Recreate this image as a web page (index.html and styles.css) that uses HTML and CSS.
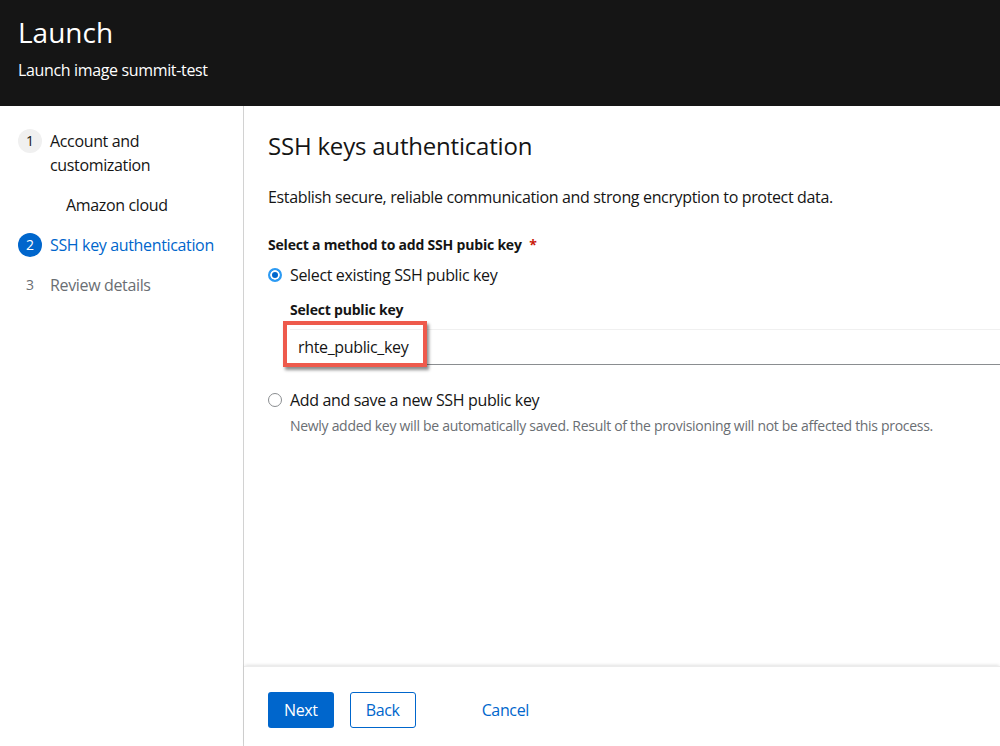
FILE: index.html
```html
<!DOCTYPE html>
<html lang="en">
<head>
<meta charset="utf-8">
<title>Launch</title>
<link rel="stylesheet" href="styles.css">
</head>
<body>
<header class="header">
  <h1 class="title">Launch</h1>
  <p class="subtitle">Launch image summit-test</p>
</header>
<div class="wizard">
  <nav class="nav">
    <div class="step">
      <span class="num num-gray">1</span>
      <span class="step-text">Account and<br>customization</span>
    </div>
    <div class="substep">Amazon cloud</div>
    <div class="step step-current">
      <span class="num num-blue">2</span>
      <span class="step-text">SSH key authentication</span>
    </div>
    <div class="step step-disabled">
      <span class="num num-plain">3</span>
      <span class="step-text">Review details</span>
    </div>
  </nav>
  <main class="main">
    <section class="content">
      <h2 class="heading">SSH keys authentication</h2>
      <p class="desc">Establish secure, reliable communication and strong encryption to protect data.</p>
      <div class="group-label">Select a method to add SSH pubic key <span class="req">*</span></div>
      <div class="radio-row">
        <span class="radio radio-on"></span>
        <span class="radio-label">Select existing SSH public key</span>
      </div>
      <div class="nested">
        <div class="field-label">Select public key</div>
        <div class="input-wrap">
          <div class="input">rhte_public_key</div>
          <div class="highlight"></div>
        </div>
      </div>
      <div class="radio-row radio-row-2">
        <span class="radio"></span>
        <span class="radio-label">Add and save a new SSH public key</span>
      </div>
      <div class="radio-help">Newly added key will be automatically saved. Result of the provisioning will not be affected this process.</div>
    </section>
    <footer class="footer">
      <button class="btn btn-primary">Next</button>
      <button class="btn btn-secondary">Back</button>
      <button class="btn btn-link">Cancel</button>
    </footer>
  </main>
</div>
</body>
</html>
```

FILE: styles.css
```css
* { box-sizing: border-box; }
html, body { margin: 0; padding: 0; }
body {
  font-family: "Open Sans", "Noto Sans", sans-serif;
  letter-spacing: -0.35px;
  color: #151515;
  background: #fff;
  width: 1000px;
  height: 746px;
  overflow: hidden;
}
.header {
  background: #151515;
  color: #fff;
  height: 106px;
  padding: 14px 18px 0;
}
.title {
  margin: 0;
  font-size: 28px;
  font-weight: 500;
  line-height: 36px;
  letter-spacing: 0;
}
.subtitle {
  margin: 8px 0 0;
  font-size: 16px;
  line-height: 24px;
}
.wizard {
  display: flex;
  height: 640px;
}
.nav {
  width: 244px;
  flex: none;
  border-right: 1px solid #d2d2d2;
  padding: 23px 0 0 18px;
}
.step {
  display: flex;
  align-items: flex-start;
  font-size: 16px;
  line-height: 24px;
  margin-bottom: 16px;
}
.num {
  width: 24px;
  height: 24px;
  border-radius: 50%;
  flex: none;
  display: flex;
  align-items: center;
  justify-content: center;
  font-size: 14px;
  margin-right: 8px;
  letter-spacing: 0;
}
.num-gray { background: #f0f0f0; color: #151515; }
.num-blue { background: #0066cc; color: #fff; }
.num-plain { color: #6a6e73; }
.step-current { color: #0066cc; }
.step-disabled { color: #6a6e73; }
.substep {
  font-size: 16px;
  line-height: 24px;
  padding-left: 48px;
  margin-bottom: 16px;
}
.main {
  flex: 1;
  display: flex;
  flex-direction: column;
  min-width: 0;
}
.content {
  flex: 1;
  padding: 25px 0 0 24px;
}
.heading {
  margin: 0;
  font-size: 24px;
  font-weight: 500;
  line-height: 30px;
  letter-spacing: -0.2px;
}
.desc {
  margin: 24px 0 0;
  font-size: 16px;
  line-height: 24px;
}
.group-label {
  margin-top: 25px;
  font-size: 14px;
  font-weight: 700;
  line-height: 21px;
  letter-spacing: -0.2px;
}
.req { color: #c9190b; margin-left: 4px; }
.radio-row {
  display: flex;
  align-items: center;
  margin-top: 8px;
  font-size: 16px;
  line-height: 24px;
}
.radio {
  width: 14px;
  height: 14px;
  border-radius: 50%;
  border: 1px solid #8a8d90;
  flex: none;
  margin-right: 8px;
  background: #fff;
}
.radio-on {
  border: 2px solid #2b9af3;
  box-shadow: inset 0 0 0 2px #fff;
  background: #0066cc;
}
.nested {
  padding-left: 22px;
  margin-top: 12px;
}
.field-label {
  font-size: 14px;
  font-weight: 700;
  line-height: 21px;
  letter-spacing: -0.2px;
}
.input-wrap {
  position: relative;
  margin-top: 9px;
}
.input {
  height: 36px;
  border-top: 1px solid #f0f0f0;
  border-bottom: 1px solid #8a8d90;
  padding: 6px 8px;
  font-size: 16px;
  line-height: 23px;
}
.highlight {
  position: absolute;
  left: -7px;
  top: -8px;
  width: 144px;
  height: 46px;
  border: 4px solid #ee5a4c;
  box-shadow: 2px 3px 3px rgba(0, 0, 0, 0.45);
}
.radio-row-2 { margin-top: 23px; }
.radio-help {
  padding-left: 22px;
  margin-top: 3px;
  font-size: 14px;
  line-height: 21px;
  color: #6a6e73;
  letter-spacing: -0.3px;
}
.footer {
  height: 80px;
  flex: none;
  display: flex;
  align-items: flex-start;
  padding: 25px 0 0 24px;
  box-shadow: 0 -2px 3px -1px rgba(0, 0, 0, 0.12);
  border-top: 1px solid #ececec;
}
.btn {
  font-family: inherit;
  font-size: 16px;
  line-height: 24px;
  padding: 5px 15px;
  border-radius: 3px;
  background: #fff;
  cursor: pointer;
  border: 1px solid transparent;
  letter-spacing: -0.35px;
}
.btn-primary {
  background: #0066cc;
  color: #fff;
  margin-right: 16px;
}
.btn-secondary {
  border-color: #0066cc;
  color: #0066cc;
}
.btn-link {
  color: #0066cc;
  margin-left: 50px;
}
```
